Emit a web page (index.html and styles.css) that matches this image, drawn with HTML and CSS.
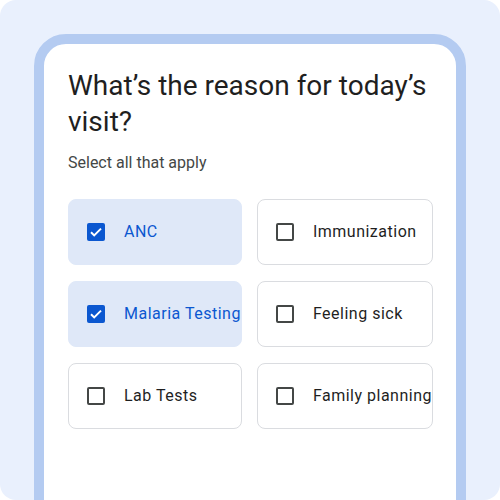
FILE: index.html
```html
<!DOCTYPE html>
<html lang="en">
<head>
<meta charset="utf-8">
<title>Reason for visit</title>
<link rel="stylesheet" href="styles.css">
</head>
<body>
<div class="page">
  <div class="phone">
    <div class="screen">
      <h1 class="title">What’s the reason for today’s visit?</h1>
      <p class="subtitle">Select all that apply</p>
      <div class="options">
        <div class="option selected">
          <span class="box"><svg viewBox="0 0 18 18" width="18" height="18"><path d="M4 9.2l3.2 3.2L14 5.6" fill="none" stroke="#fff" stroke-width="2"/></svg></span>
          <span class="label">ANC</span>
        </div>
        <div class="option">
          <span class="box"></span>
          <span class="label">Immunization</span>
        </div>
        <div class="option selected">
          <span class="box"><svg viewBox="0 0 18 18" width="18" height="18"><path d="M4 9.2l3.2 3.2L14 5.6" fill="none" stroke="#fff" stroke-width="2"/></svg></span>
          <span class="label">Malaria Testing</span>
        </div>
        <div class="option">
          <span class="box"></span>
          <span class="label">Feeling sick</span>
        </div>
        <div class="option">
          <span class="box"></span>
          <span class="label">Lab Tests</span>
        </div>
        <div class="option">
          <span class="box"></span>
          <span class="label">Family planning</span>
        </div>
      </div>
    </div>
  </div>
</div>
</body>
</html>
```

FILE: styles.css
```css
html, body {
  margin: 0;
  padding: 0;
  background: #ffffff;
}

.page {
  width: 500px;
  height: 500px;
  box-sizing: border-box;
  background: #e9f0fd;
  border-radius: 16px;
  padding: 34px 34px 0 34px;
  overflow: hidden;
  font-family: Roboto, "Noto Sans", sans-serif;
}

.phone {
  height: 520px;
  box-sizing: border-box;
  border: 10px solid #b4cbf1;
  border-radius: 32px;
  background: #ffffff;
}

.screen {
  padding: 24px 24px 0 24px;
}

.title {
  margin: 0;
  font-size: 28px;
  line-height: 36px;
  font-weight: 400;
  color: #1f1f1f;
}

.subtitle {
  margin: 13px 0 0 0;
  font-size: 16px;
  line-height: 20px;
  letter-spacing: 0;
  color: #444746;
}

.options {
  margin-top: 26px;
  display: grid;
  grid-template-columns: 1fr 1fr;
  column-gap: 15px;
  row-gap: 16px;
}

.option {
  height: 66px;
  box-sizing: border-box;
  border: 1px solid #dadce0;
  border-radius: 8px;
  display: flex;
  align-items: center;
  gap: 19px;
  padding-left: 18px;
  white-space: nowrap;
  font-size: 16px;
  letter-spacing: 0.5px;
  color: #1f1f1f;
}

.option.selected {
  background: #dfe8f8;
  border-color: #dfe8f8;
  color: #0b57d0;
}

.box {
  width: 18px;
  height: 18px;
  box-sizing: border-box;
  border: 2px solid #444746;
  border-radius: 2px;
  flex: none;
  display: block;
}

.option.selected .box {
  border: none;
  background: #0b57d0;
}

.box svg {
  display: block;
}

.label {
  line-height: 24px;
}
```
